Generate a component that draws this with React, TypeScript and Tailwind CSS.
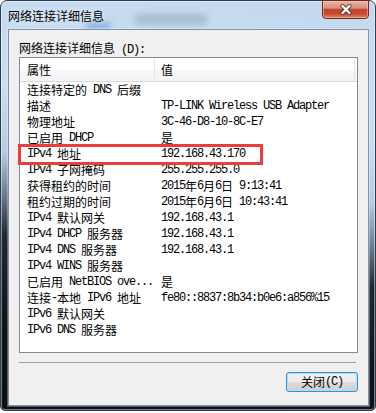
import React from "react";

const CJK_SPLIT = /([\u2E80-\u9FFF\u3000-\u303F\uFF00-\uFFEF]+)/;
const isCJK = (s: string) => /[\u2E80-\u9FFF\u3000-\u303F\uFF00-\uFFEF]/.test(s);

function T({ s }: { s: string }) {
  const parts = s.split(CJK_SPLIT).filter((p) => p.length > 0);
  return (
    <>
      {parts.map((p, i) =>
        isCJK(p) ? (
          <span
            key={i}
            className="[font-family:'Noto_Sans_CJK_SC','Noto_Sans_CJK_JP',sans-serif] text-[12px]"
          >
            {p}
          </span>
        ) : (
          <span
            key={i}
            className="[font-family:'Liberation_Mono',monospace] text-[12px] tracking-[-1.2px]"
          >
            {p}
          </span>
        )
      )}
    </>
  );
}

const rows: [string, string][] = [
  ["连接特定的 DNS 后缀", ""],
  ["描述", "TP-LINK Wireless USB Adapter"],
  ["物理地址", "3C-46-D8-10-8C-E7"],
  ["已启用 DHCP", "是"],
  ["IPv4 地址", "192.168.43.170"],
  ["IPv4 子网掩码", "255.255.255.0"],
  ["获得租约的时间", "2015年6月6日 9:13:41"],
  ["租约过期的时间", "2015年6月6日 10:43:41"],
  ["IPv4 默认网关", "192.168.43.1"],
  ["IPv4 DHCP 服务器", "192.168.43.1"],
  ["IPv4 DNS 服务器", "192.168.43.1"],
  ["IPv4 WINS 服务器", ""],
  ["已启用 NetBIOS ove...", "是"],
  ["连接-本地 IPv6 地址", "fe80::8837:8b34:b0e6:a856%15"],
  ["IPv6 默认网关", ""],
  ["IPv6 DNS 服务器", ""],
];

export default function App() {
  return (
    <div className="w-[376px] h-[413px] bg-white text-black overflow-hidden">
      <div className="relative w-[376px] h-[411px] rounded-t-[7px] rounded-b-[5px] border border-[#2e3d4d] bg-[linear-gradient(188deg,#c3d9ef_0%,#cadef2_30%,#b3cbe3_44%,#6b7f94_53%,#1f2832_62%,#10151b_80%,#0c1015_100%)] shadow-[inset_0_0_0_1px_rgba(255,255,255,0.45)] flex flex-col pl-[7px] pr-[6px] pb-[4px]">
        {/* blurred glass background hints */}
        <div className="absolute left-[134px] top-[13px] w-[72px] h-[11px] rounded-[4px] bg-[#8d9fb3] opacity-50 blur-[3px]" />
        <div className="absolute left-[84px] top-[21px] w-[26px] h-[8px] rounded-[4px] bg-[#4f86c8] opacity-50 blur-[3px]" />

        {/* title bar */}
        <div className="relative h-[28px] flex items-start justify-between">
          <div className="pt-[6px] leading-[16px] whitespace-pre [text-shadow:0_0_6px_rgba(255,255,255,0.9)]">
            <T s="网络连接详细信息" />
          </div>
          <div className="mt-[-1px] w-[47px] h-[19px] rounded-b-[4px] border border-[#6a2a1e] bg-[linear-gradient(to_bottom,#ecb3a6_0%,#dc8e7e_42%,#c5432b_50%,#c84a2e_75%,#df8262_100%)] shadow-[inset_0_0_0_1px_rgba(255,220,210,0.45)] flex items-center justify-center">
            <svg width="14" height="11" viewBox="0 0 14 11">
              <path d="M3.5 2 L10.5 9 M10.5 2 L3.5 9" stroke="#3a2a2a" strokeOpacity="0.75" strokeWidth="4.2" strokeLinecap="round" fill="none" />
              <path d="M3.5 2 L10.5 9 M10.5 2 L3.5 9" stroke="#ffffff" strokeWidth="2.4" strokeLinecap="round" fill="none" />
            </svg>
          </div>
        </div>

        {/* client area */}
        <div className="relative flex-1 bg-[#f0f0f0] border border-[#7f93a8] shadow-[0_0_0_1px_rgba(255,255,255,0.3)] flex flex-col px-[10px] pt-[9px]">
          <div className="h-[16px] leading-[16px] whitespace-pre">
            <T s="网络连接详细信息 (D):" />
          </div>

          {/* list box */}
          <div className="relative mt-[2px] h-[296px] bg-white border border-[#828790] flex flex-col">
            <div className="h-[24px] flex border-b border-[#d9d9d9] bg-[linear-gradient(to_bottom,#ffffff_0%,#ffffff_50%,#f7f8fa_51%,#f3f4f6_100%)]">
              <div className="w-[134px] pl-[7px] flex items-center leading-[16px] whitespace-pre">
                <T s="属性" />
              </div>
              <div className="w-[1px] bg-[#e3e5e8]" />
              <div className="w-[199px] pl-[6px] flex items-center leading-[16px] whitespace-pre">
                <T s="值" />
              </div>
              <div className="w-[1px] bg-[#e3e5e8]" />
            </div>
            {rows.map(([k, v], i) => (
              <div key={i} className="h-[16px] flex leading-[16px] whitespace-pre">
                <div className="w-[135px] pl-[7px] flex items-center">
                  <T s={k} />
                </div>
                <div className="pl-[6px] flex items-center">
                  <T s={v} />
                </div>
              </div>
            ))}

            {/* red annotation box */}
            <div className="absolute left-[-2px] top-[86px] w-[245px] h-[21px] border-[3px] border-[#ee3b3b]" />
          </div>

          <div className="mt-[9px] mr-[2px] h-[1px] bg-[#a0a0a0]" />

          <div className="mt-[9px] flex justify-end">
            <div className="w-[72px] h-[20px] rounded-[3px] border border-[#3c8fd0] shadow-[inset_0_0_0_1px_#a6e2fb] bg-[linear-gradient(to_bottom,#f2f2f2_0%,#ebebeb_50%,#dddddd_51%,#cfcfcf_100%)] flex items-center justify-center leading-[16px] whitespace-pre">
              <T s="关闭(C)" />
            </div>
          </div>
        </div>
      </div>
    </div>
  );
}
